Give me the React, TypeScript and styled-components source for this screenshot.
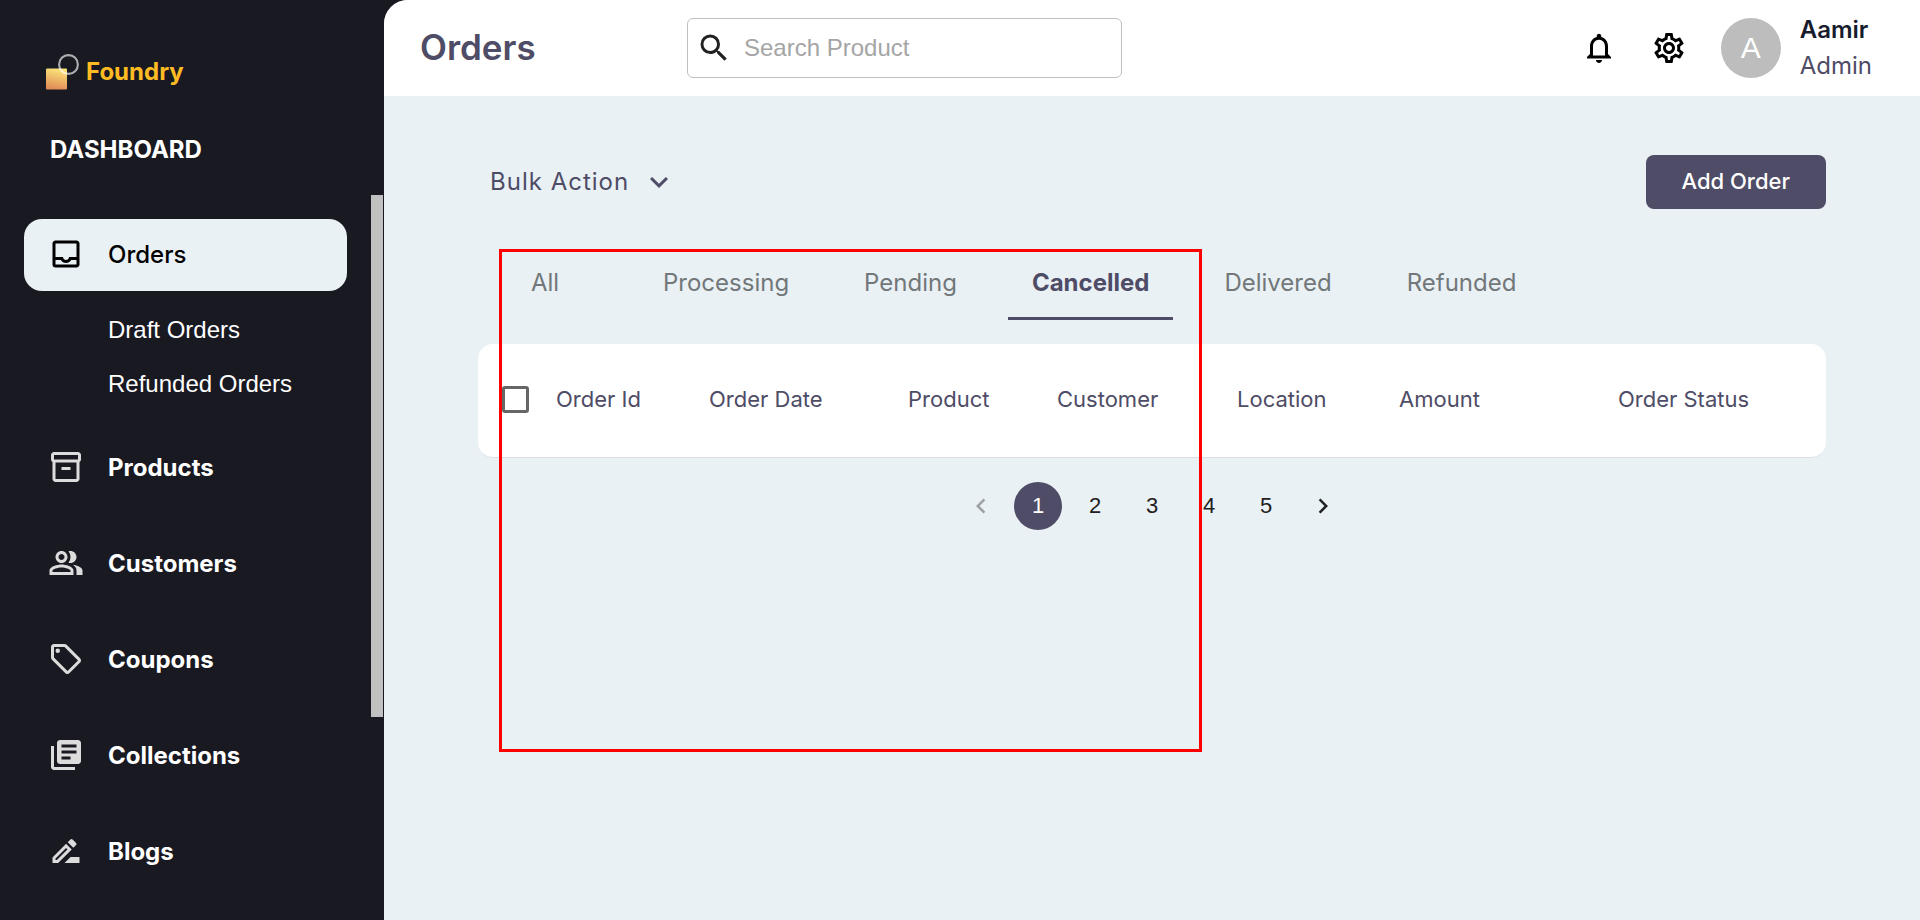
import React, { useState } from "react";
import styled, { createGlobalStyle } from "styled-components";
import {
  MdKeyboardArrowDown,
  MdLibraryBooks,
  MdNavigateBefore,
  MdNavigateNext,
  MdNotificationsNone,
  MdOutlineDriveFileRenameOutline,
  MdOutlineInbox,
  MdOutlineInventory2,
  MdOutlineLocalOffer,
  MdOutlinePeopleAlt,
  MdOutlineSettings,
  MdSearch,
} from "react-icons/md";

const inter = `"Inter", "Liberation Sans", sans-serif`;
const arial = `"Liberation Sans", Arial, sans-serif`;

const color = {
  ink: "#4e4c66",
  side: "#191922",
  pale: "#e9f1f5",
  muted: "#727779",
};

const GlobalStyle = createGlobalStyle`
  *, *::before, *::after { box-sizing: border-box; }
  body { margin: 0; background: ${color.pale}; font-family: ${inter}; }
  button, input, select { font: inherit; color: inherit; }
  button { cursor: pointer; border: 0; background: none; padding: 0; }
  a { color: inherit; text-decoration: none; }
  ul { list-style: none; margin: 0; padding: 0; }
`;

const Shell = styled.div`
  display: grid;
  grid-template-columns: 1fr 4fr;
  min-height: 100vh;
  background: ${color.side};
`;

const Sidebar = styled.aside`
  position: sticky;
  top: 0;
  height: 100vh;
  display: flex;
  flex-direction: column;
  overflow: hidden;
  color: #fff;
`;

const Brand = styled.a`
  display: flex;
  align-items: center;
  gap: 5px;
  height: 36px;
  margin: 54px 24px 0 45px;
  color: #fdbb24;
  font-size: 24px;
  font-weight: 700;
  line-height: 36px;
`;

const SideTitle = styled.h2`
  flex: none;
  margin: 42px 24px 27px 50px;
  font-size: 24px;
  font-weight: 700;
  line-height: 36px;
`;

const SideBody = styled.div`
  flex: 1;
  min-height: 0;
  display: flex;
  padding-right: 1px;
`;

const Nav = styled.nav`
  flex: 1;
  overflow: hidden;
  padding: 24px;
`;

const ScrollTrack = styled.div`
  flex: none;
  width: 12px;
`;

const ScrollThumb = styled.div`
  height: 72%;
  background: #c1c1c1;
`;

const NavItem = styled.li`
  & + & {
    margin-top: 24px;
  }
`;

const NavLink = styled.a<{ $active?: boolean }>`
  display: flex;
  align-items: center;
  gap: 24px;
  height: 72px;
  padding: 0 24px 2px;
  border-radius: 18px;
  background: ${(p) => (p.$active ? color.pale : "transparent")};
  color: ${(p) => (p.$active ? "#000" : "#fff")};
  font-size: 24px;
  font-weight: ${(p) => (p.$active ? 500 : 700)};

  svg {
    flex: none;
    width: 36px;
    height: 36px;
    color: ${(p) => (p.$active ? "#000" : "#dcdcdc")};
  }
`;

const SubNav = styled.ul`
  display: grid;
  gap: 6px;
  padding: 15px 0 0 84px;
`;

const SubLink = styled.a`
  display: block;
  font-family: ${arial};
  font-size: 24px;
  line-height: 48px;
`;

const Main = styled.div`
  display: flex;
  flex-direction: column;
  min-width: 0;
  border-top-left-radius: 24px;
  overflow: hidden;
  background: ${color.pale};
`;

const Header = styled.header`
  display: grid;
  grid-template-columns: minmax(160px, 267px) minmax(240px, 435px) 1fr;
  align-items: center;
  height: 96px;
  padding: 0 48px 0 36px;
  background: #fff;
`;

const PageTitle = styled.h1`
  margin: 0;
  padding-bottom: 2px;
  color: ${color.ink};
  font-size: 35px;
  font-weight: 600;
  line-height: 48px;
`;

const SearchBox = styled.label`
  display: flex;
  align-items: center;
  gap: 12px;
  height: 60px;
  padding: 0 8px;
  border: 1px solid #bfbfbf;
  border-radius: 6px;

  svg {
    flex: none;
    width: 36px;
    height: 36px;
    color: #212121;
  }
`;

const SearchInput = styled.input`
  flex: 1;
  min-width: 0;
  padding: 0;
  border: 0;
  outline: 0;
  background: none;
  font-family: ${arial};
  font-size: 24px;

  &::placeholder {
    color: #a5a5a5;
    opacity: 1;
  }
`;

const Account = styled.div`
  display: flex;
  align-items: center;
  justify-content: flex-end;
`;

const HeaderButton = styled.button`
  display: grid;
  place-items: center;
  width: 36px;
  height: 36px;
  margin-right: 34px;

  svg {
    width: 36px;
    height: 36px;
    color: #000;
  }
`;

const Avatar = styled.div`
  display: grid;
  place-items: center;
  width: 60px;
  height: 60px;
  margin-right: 19px;
  border-radius: 50%;
  background: #bdbdbd;
  color: #fff;
  font-family: ${arial};
  font-size: 30px;
`;

const User = styled.div`
  color: ${color.ink};
  font-size: 24px;
  line-height: 36px;

  strong {
    display: block;
    color: #161c2c;
    font-weight: 600;
  }
`;

const Content = styled.main`
  position: relative;
  padding: 59px 94px 48px;
`;

const Toolbar = styled.div`
  display: flex;
  align-items: center;
  justify-content: space-between;
  height: 54px;
  margin-bottom: 39px;
`;

const BulkAction = styled.label`
  display: grid;
  align-items: center;
  justify-items: end;
  padding-left: 12px;
  color: ${color.ink};

  > * {
    grid-area: 1 / 1;
  }

  svg {
    width: 36px;
    height: 36px;
    pointer-events: none;
  }
`;

const BulkSelect = styled.select`
  appearance: none;
  height: 54px;
  padding: 0 47px 2px 0;
  border: 0;
  outline: 0;
  background: none;
  font-size: 24px;
  letter-spacing: 1px;
`;

const PrimaryButton = styled.button`
  height: 54px;
  padding: 0 36px 3px;
  border-radius: 8px;
  background: ${color.ink};
  color: #fff;
  font-size: 22px;
  font-weight: 500;
`;

const Tabs = styled.div`
  display: flex;
  gap: 27px;
  margin-bottom: 24px;
`;

const Tab = styled.button<{ $active: boolean }>`
  height: 72px;
  min-width: 134px;
  padding: 0 24px;
  border-bottom: 3px solid ${(p) => (p.$active ? color.ink : "transparent")};
  color: ${(p) => (p.$active ? color.ink : color.muted)};
  font-size: 24px;
  font-weight: ${(p) => (p.$active ? 700 : 400)};
`;

const Panel = styled.div`
  border-bottom: 1px solid #dadde1;
  border-radius: 15px;
  background: #fff;
`;

const OrdersTable = styled.table`
  width: 100%;
  table-layout: fixed;
  border-collapse: collapse;
`;

const HeadCell = styled.th`
  height: 113px;
  padding: 0 0 3px 24px;
  color: ${color.ink};
  font-size: 22px;
  font-weight: 400;
  text-align: left;
  white-space: nowrap;
`;

const Checkbox = styled.input`
  display: block;
  appearance: none;
  width: 27px;
  height: 27px;
  margin: 0;
  border: 3px solid #666;
  border-radius: 3px;

  &:checked {
    background: ${color.ink};
  }
`;

const Pagination = styled.nav`
  display: flex;
  justify-content: center;
  gap: 9px;
  margin-top: 24px;
`;

const PageButton = styled.button<{ $active?: boolean }>`
  display: grid;
  place-items: center;
  width: 48px;
  height: 48px;
  border-radius: 50%;
  background: ${(p) => (p.$active ? color.ink : "transparent")};
  color: ${(p) => (p.$active ? "#fff" : "#1f2021")};
  font-family: ${arial};
  font-size: 22px;

  svg {
    width: 30px;
    height: 30px;
  }

  &:disabled {
    color: #212121;
    opacity: 0.38;
  }
`;

const Highlight = styled.div`
  position: absolute;
  top: 153px;
  left: 21px;
  width: 703px;
  height: 503px;
  margin-left: 94px;
  border: 3px solid #fe0000;
  pointer-events: none;
`;

const navItems = [
  { label: "Orders", icon: MdOutlineInbox, children: ["Draft Orders", "Refunded Orders"] },
  { label: "Products", icon: MdOutlineInventory2 },
  { label: "Customers", icon: MdOutlinePeopleAlt },
  { label: "Coupons", icon: MdOutlineLocalOffer },
  { label: "Collections", icon: MdLibraryBooks },
  { label: "Blogs", icon: MdOutlineDriveFileRenameOutline },
];

const tabs = ["All", "Processing", "Pending", "Cancelled", "Delivered", "Refunded"];

const columns = [
  { label: "Order Id", width: 153 },
  { label: "Order Date", width: 199 },
  { label: "Product", width: 149 },
  { label: "Customer", width: 180 },
  { label: "Location", width: 162 },
  { label: "Amount", width: 219 },
  { label: "Order Status", width: 232 },
];

function Logo() {
  return (
    <svg width="36" height="36" viewBox="0 0 36 36" aria-hidden="true">
      <defs>
        <linearGradient id="logoFill" x1="0.6" y1="0" x2="0.4" y2="1">
          <stop offset="0" stopColor="#fbe67b" />
          <stop offset="1" stopColor="#e08a55" />
        </linearGradient>
      </defs>
      <rect x="1" y="14.5" width="21" height="21" rx="1" fill="url(#logoFill)" />
      <circle cx="23.5" cy="10.5" r="9.4" fill="none" stroke="#fff" strokeOpacity="0.65" strokeWidth="2.1" />
    </svg>
  );
}

export default function App() {
  const [tab, setTab] = useState("Cancelled");
  const [page, setPage] = useState(1);

  return (
    <>
      <GlobalStyle />
      <Shell>
        <Sidebar>
          <Brand href="#home">
            <Logo />
            Foundry
          </Brand>
          <SideTitle>DASHBOARD</SideTitle>
          <SideBody>
            <Nav aria-label="Main">
              <ul>
                {navItems.map(({ label, icon: Icon, children }) => (
                  <NavItem key={label}>
                    <NavLink href={`#${label.toLowerCase()}`} $active={label === "Orders"}>
                      <Icon aria-hidden="true" />
                      {label}
                    </NavLink>
                    {children && (
                      <SubNav>
                        {children.map((child) => (
                          <li key={child}>
                            <SubLink href={`#${child.toLowerCase().replace(" ", "-")}`}>{child}</SubLink>
                          </li>
                        ))}
                      </SubNav>
                    )}
                  </NavItem>
                ))}
              </ul>
            </Nav>
            <ScrollTrack aria-hidden="true">
              <ScrollThumb />
            </ScrollTrack>
          </SideBody>
        </Sidebar>

        <Main>
          <Header>
            <PageTitle>Orders</PageTitle>
            <SearchBox>
              <MdSearch aria-hidden="true" />
              <SearchInput type="text" placeholder="Search Product" aria-label="Search Product" />
            </SearchBox>
            <Account>
              <HeaderButton type="button" aria-label="Notifications">
                <MdNotificationsNone />
              </HeaderButton>
              <HeaderButton type="button" aria-label="Settings">
                <MdOutlineSettings />
              </HeaderButton>
              <Avatar aria-hidden="true">A</Avatar>
              <User>
                <strong>Aamir</strong>
                Admin
              </User>
            </Account>
          </Header>

          <Content>
            <Toolbar>
              <BulkAction>
                <BulkSelect aria-label="Bulk Action">
                  <option>Bulk Action</option>
                </BulkSelect>
                <MdKeyboardArrowDown aria-hidden="true" />
              </BulkAction>
              <PrimaryButton type="button">Add Order</PrimaryButton>
            </Toolbar>

            <Tabs role="tablist">
              {tabs.map((name) => (
                <Tab
                  key={name}
                  type="button"
                  role="tab"
                  aria-selected={name === tab}
                  $active={name === tab}
                  onClick={() => setTab(name)}
                >
                  {name}
                </Tab>
              ))}
            </Tabs>

            <Panel>
              <OrdersTable>
                <colgroup>
                  <col width={54} />
                  {columns.map((c) => (
                    <col key={c.label} width={c.width} />
                  ))}
                </colgroup>
                <thead>
                  <tr>
                    <HeadCell scope="col">
                      <Checkbox type="checkbox" aria-label="Select all orders" />
                    </HeadCell>
                    {columns.map((c) => (
                      <HeadCell key={c.label} scope="col">
                        {c.label}
                      </HeadCell>
                    ))}
                  </tr>
                </thead>
              </OrdersTable>
            </Panel>

            <Pagination aria-label="Pages">
              <PageButton type="button" aria-label="Previous page" disabled={page === 1} onClick={() => setPage(page - 1)}>
                <MdNavigateBefore />
              </PageButton>
              {[1, 2, 3, 4, 5].map((n) => (
                <PageButton key={n} type="button" $active={n === page} onClick={() => setPage(n)}>
                  {n}
                </PageButton>
              ))}
              <PageButton type="button" aria-label="Next page" disabled={page === 5} onClick={() => setPage(page + 1)}>
                <MdNavigateNext />
              </PageButton>
            </Pagination>
            <Highlight />
          </Content>
        </Main>
      </Shell>
    </>
  );
}
